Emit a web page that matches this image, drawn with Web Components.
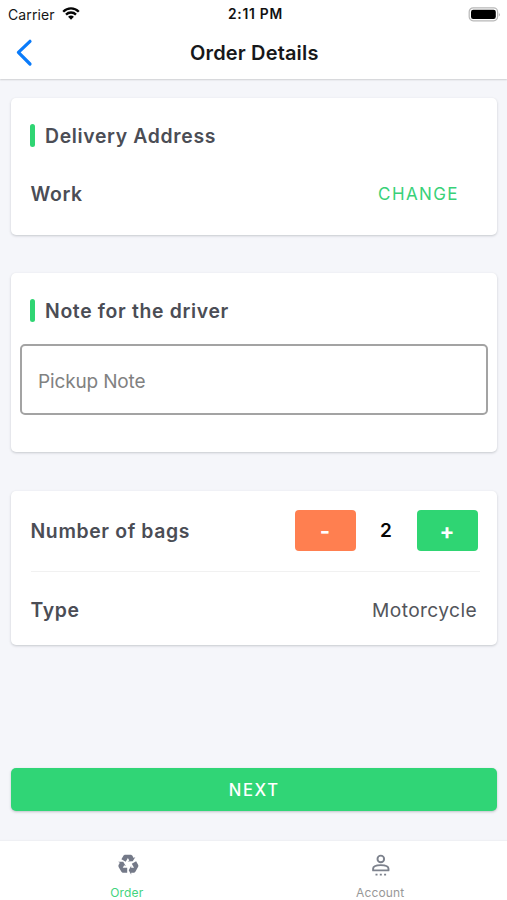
<!DOCTYPE html>
<html lang="en">
<head>
<meta charset="utf-8">
<title>Order Details</title>
<style>
html, body { margin: 0; height: 100%; }
body { background: #f5f6fa; font-family: Inter, "Liberation Sans", sans-serif; color: #4b4d55; overflow: hidden; }
</style>
</head>
<body>
<order-screen></order-screen>
<script>
const define = (name, html) => customElements.define(name, class extends HTMLElement {
  constructor() {
    super();
    const t = document.createElement('template');
    t.innerHTML = '<style>*{box-sizing:border-box}</style>' + html;
    this.attachShadow({ mode: 'open' }).append(t.content.cloneNode(true));
  }
});

define('status-bar', `
<style>
:host { display: grid; grid-template-columns: 1fr auto 1fr; align-items: center; height: 27px; padding: 0 6px 0 8px; box-sizing: border-box; color: #161616; font-size: 14px; line-height: 27px; }
.left { display: flex; align-items: center; gap: 7px; letter-spacing: .12px; }
.time { font-size: 13.8px; font-weight: 600; letter-spacing: .75px; padding: 1px 0 0 2px; color: #111; }
.battery { justify-self: end; }
svg { display: block; }
</style>
<div class="left"><span>Carrier</span>
<svg width="18" height="14" viewBox="0 0 18 14" fill="none" stroke="#050505" stroke-width="2.3"><path d="M1.2 4.7C5.6 .2 12.4 .2 16.8 4.7M4 7.6C6.8 4.8 11.2 4.8 14 7.6"/><path d="M6.1 9.7C7.8 8.1 10.2 8.1 11.9 9.7L9 12.7Z" fill="#050505" stroke="none"/></svg></div>
<span class="time">2:11 PM</span>
<svg class="battery" width="33" height="15" viewBox="0 0 33 15"><rect x="1.2" y=".8" width="28.4" height="13" rx="4" fill="#fff" stroke="#b8b8b8" stroke-width="1.2"/><rect x="3" y="2.7" width="24.8" height="9.2" rx="2.2" fill="#000"/><path d="M30.9 5.4Q32.6 7.4 30.9 9.4Z" fill="#aaa"/></svg>`);

define('nav-header', `
<style>
:host { display: grid; grid-template-columns: 1fr auto 1fr; align-items: center; height: 52px; padding-left: 15px; box-sizing: border-box; font-size: 20px; font-weight: 600; letter-spacing: .16px; color: #17181a; }
svg { display: block; }
span { padding-right: 13.5px; line-height: 52px; height: 52px; }
</style>
<svg width="20" height="28" viewBox="0 0 20 28" fill="none" stroke="#0a7bfa" stroke-width="3.2" stroke-linecap="round" stroke-linejoin="round"><path d="M15 2.3L3.4 13.4L15 25"/></svg>
<span><slot></slot></span>`);

define('info-card', `
<style>
:host { display: flex; flex-direction: column; background: #fff; border-radius: 5px; box-shadow: 0 1px 2.5px rgba(30,40,50,.22); box-sizing: border-box; }
</style><slot></slot>`);

define('section-title', `
<style>
:host { display: flex; align-items: center; gap: 10px; height: 23px; margin: 26px 20px 0 19.5px; font-size: 19.4px; font-weight: 600; letter-spacing: .66px; white-space: nowrap; }
i { width: 5px; height: 23px; border-radius: 2.5px; background: #2fd573; }
span { line-height: 24px; }
</style><i></i><span><slot></slot></span>`);

define('detail-row', `
<style>
:host { display: flex; align-items: center; justify-content: space-between; margin: 0 20px; font-size: 19.2px; letter-spacing: .38px; }
b { font-size: 19.4px; font-weight: 600; letter-spacing: .64px; white-space: nowrap; }
</style><b><slot name="label"></slot></b><slot></slot>`);

define('link-button', `
<style>
:host { display: block; color: #38d178; font-size: 17px; letter-spacing: 1.4px; padding-right: 18px; }
</style><slot></slot>`);

define('note-input', `
<style>
:host { display: flex; align-items: center; height: 71px; margin: 22px 9.5px 0; padding-left: 16px; border: 2px solid #a3a3a3; border-radius: 5px; box-sizing: border-box; font-size: 19px; color: #818181; letter-spacing: -.15px; }
span { padding-top: 3px; }
</style><span><slot></slot></span>`);

define('bag-stepper', `
<style>
:host { display: grid; grid-template-columns: 61px 61px 61px; align-items: center; text-align: center; letter-spacing: 0; font-weight: 600; font-size: 19px; color: #050505; }
.b { height: 41px; border-radius: 4px; color: #fff; line-height: 42px; font-size: 22px; font-weight: 700; }
.minus { background: #ff7f50; }
.plus { background: #2fd573; }
</style><span class="b minus">-</span><span><slot></slot></span><span class="b plus">+</span>`);

define('primary-button', `
<style>
:host { display: block; height: 43px; border-radius: 5px; background: #30d576; color: #fff; text-align: center; font-size: 16.6px; line-height: 44px; font-weight: 500; letter-spacing: 1.7px; padding-left: 1px; box-sizing: border-box; box-shadow: 0 1px 2.5px rgba(30,40,50,.25); }
</style><slot></slot>`);

define('tab-item', `
<style>
:host { display: flex; flex-direction: column; align-items: center; flex: 1; color: #989898; font-size: 12px; letter-spacing: .15px; padding: 11px 0 0; box-sizing: border-box; }
span { margin-top: 9px; line-height: 15px; }
</style><slot name="icon"></slot><span><slot></slot></span>`);

define('order-screen', `
<style>
:host { display: flex; flex-direction: column; height: 900px; }
header { flex: none; height: 79px; background: #fff; box-shadow: 0 1px 1.5px rgba(0,0,0,.16); }
main { flex: 1; display: flex; flex-direction: column; padding: 19px 10px 30px 10.5px; }
.address { height: 136.5px; }
.address detail-row { margin-top: 34.5px; height: 24px; }
.note { height: 178.5px; margin-top: 38.5px; }
.bags { height: 154px; margin-top: 39px; }
.count { height: 80px; margin-right: 19.5px; }
hr { width: auto; height: 1px; margin: 0 17px 0 20px; border: 0; background: #f1f1f1; flex: none; }
.type { height: 73px; padding-top: 3px; box-sizing: border-box; color: #53555b; }
.type [slot=label], .count [slot=label] { color: #4b4d55; }
primary-button { margin-top: auto; }
footer { flex: none; display: flex; height: 59px; background: #fff; box-shadow: 0 -1px 1px rgba(0,0,0,.025); }
.active { color: #42d47d; }
svg { display: block; }
</style>
<header><status-bar></status-bar><nav-header>Order Details</nav-header></header>
<main>
<info-card class="address"><section-title>Delivery Address</section-title><detail-row><span slot="label">Work</span><link-button>CHANGE</link-button></detail-row></info-card>
<info-card class="note"><section-title>Note for the driver</section-title><note-input>Pickup Note</note-input></info-card>
<info-card class="bags"><detail-row class="count"><span slot="label">Number of bags</span><bag-stepper>2</bag-stepper></detail-row><hr><detail-row class="type"><span slot="label">Type</span><span>Motorcycle</span></detail-row></info-card>
<primary-button>NEXT</primary-button>
</main>
<footer>
<tab-item class="active"><svg slot="icon" width="24" height="24" viewBox="-1.2 .3 24 24" fill="#747988"><path d="M21.82,15.42L19.32,19.75C18.83,20.61 17.92,21.06 17,21H15V23L12.5,18.5L15,14V16H17.82L15.6,12.15L19.93,9.65L21.73,12.77C22.25,13.54 22.32,14.57 21.82,15.42M9.21,3.06H14.21C15.19,3.06 16.04,3.63 16.45,4.45L17.45,6.19L19.18,5.19L16.54,9.6L11.39,9.69L13.12,8.69L11.71,6.24L9.5,10.09L5.16,7.59L6.96,4.47C7.37,3.64 8.22,3.06 9.21,3.06M5.05,19.76L2.55,15.43C2.06,14.58 2.13,13.56 2.64,12.79L3.64,11.06L1.91,10.06L7.05,10.14L9.7,14.56L7.97,13.56L6.56,16H11V21H7.4C6.47,21.07 5.55,20.61 5.05,19.76Z"/></svg>Order</tab-item>
<tab-item><svg slot="icon" width="24" height="24" viewBox="0 0 24 24" fill="none" stroke="#7c818c" stroke-width="1.9"><circle cx="12.8" cy="6.9" r="3.3"/><path d="M5.1 18.4V16.7C5.1 11.9 20.5 11.9 20.5 16.7V18.4Z" stroke-linejoin="round"/><path d="M7.5 22.6h2M11.8 22.6h2M16.1 22.6h2"/></svg>Account</tab-item>
</footer>`);
</script>
</body>
</html>
